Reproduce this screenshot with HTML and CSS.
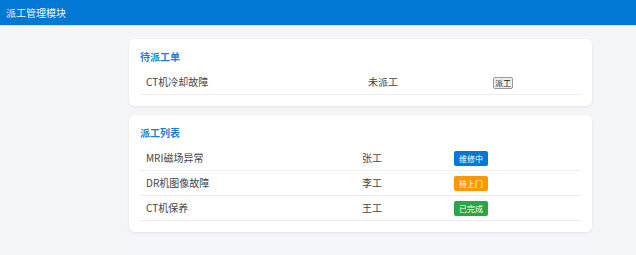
FILE: index.html
```html
<!DOCTYPE html>
<html lang="zh-CN">

<head>
  <meta charset="UTF-8" />
  <meta name="viewport" content="width=device-width, initial-scale=1.0" />
  <title>派工管理模块</title>
  <link rel="stylesheet" href="styles.css">
</head>

<body>
  <div class="header">派工管理模块</div>
  <div class="main">
    <div class="card">
      <h3>待派工单</h3>
      <table class="pending">
        <tr>
          <td>CT机冷却故障</td>
          <td>未派工</td>
          <td><button type="button">派工</button></td>
        </tr>
      </table>
    </div>
    <div class="card">
      <h3>派工列表</h3>
      <table class="list">
        <tr>
          <td>MRI磁场异常</td>
          <td>张工</td>
          <td><span class="badge repairing">维修中</span></td>
        </tr>
        <tr>
          <td>DR机图像故障</td>
          <td>李工</td>
          <td><span class="badge waiting">待上门</span></td>
        </tr>
        <tr>
          <td>CT机保养</td>
          <td>王工</td>
          <td><span class="badge done">已完成</span></td>
        </tr>
      </table>
    </div>
  </div>
</body>

</html>
```

FILE: styles.css
```css
body {
  margin: 0;
  background: #f4f5f9;
  font-family: "Noto Sans CJK SC", "Noto Sans", sans-serif;
  font-size: 10px;
  color: #444;
}

.header {
  height: 26px;
  line-height: 26px;
  padding-left: 6px;
  background: #0078d4;
  color: #f2f7fc;
  font-size: 10px;
  border-bottom: 1px solid #d6e4f2;
  box-sizing: border-box;
}

.main {
  padding: 13px 44px 13px 129px;
}

.card {
  background: #fff;
  border-radius: 6px;
  padding: 11px;
  margin-bottom: 9px;
  box-shadow: 0 1px 3px rgba(0, 0, 0, 0.08);
}

.card h3 {
  margin: 0 0 6px 0;
  font-size: 10px;
  line-height: 14px;
  color: #1a7fd6;
  font-weight: bold;
}

.card table {
  width: 100%;
  border-collapse: collapse;
  table-layout: fixed;
}

.card td {
  padding: 0 6px;
  height: 24px;
  line-height: 14px;
  border-bottom: 1px solid #eee;
  vertical-align: middle;
}

.pending td:nth-child(1) {
  width: 210px;
}

.pending td:nth-child(2) {
  width: 113px;
}

.list td:nth-child(1) {
  width: 204px;
}

.list td:nth-child(2) {
  width: 80px;
}

.card button {
  font-family: inherit;
  font-size: 8px;
  line-height: 10px;
  padding: 0 1px;
  color: #222;
  background: #efefef;
  border: 1px solid #999;
  border-radius: 2px;
  vertical-align: middle;
}

.badge {
  display: inline-block;
  font-size: 8px;
  line-height: 15px;
  padding: 0 5px;
  border-radius: 2px;
  color: #fff;
  vertical-align: middle;
}

.repairing {
  background: #0078d4;
}

.waiting {
  background: #ff9800;
}

.done {
  background: #28a745;
}
```
